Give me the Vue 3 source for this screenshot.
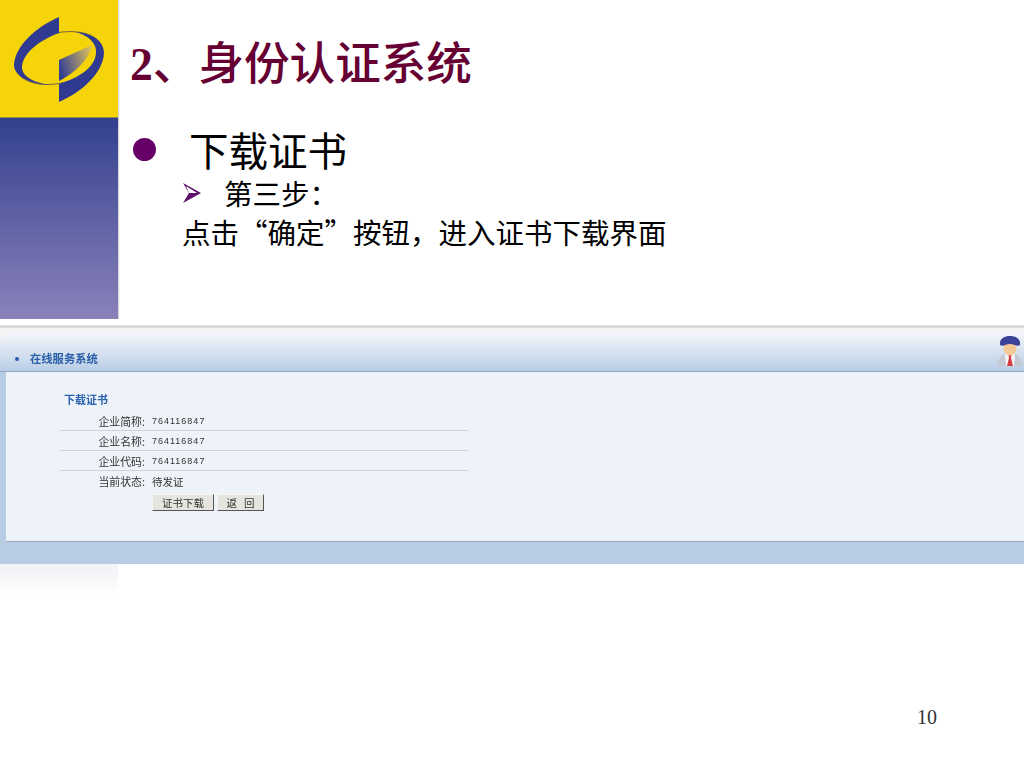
<script setup>
const rows = [
  { label: '企业简称:', value: '764116847' },
  { label: '企业名称:', value: '764116847' },
  { label: '企业代码:', value: '764116847' },
  { label: '当前状态:', value: '待发证' }
]
</script>

<template>
  <div class="slide" lang="zh-CN">
    <section class="top">
      <aside class="side">
        <div class="logo">
          <svg width="118" height="118" viewBox="0 0 118 118">
            <defs>
              <linearGradient id="wedge" x1="0" y1="0.6" x2="1" y2="0.3">
                <stop offset="0" stop-color="#343f92" />
                <stop offset="1" stop-color="#d8bd5c" />
              </linearGradient>
            </defs>
            <ellipse cx="59" cy="58" rx="44" ry="25" transform="rotate(-14 59 58)" fill="none" stroke="#7a6a3a" stroke-width="1" />
            <path d="M59 17 L59 33 C40 40 24 52 22 66 C21 76 34 83 50 85 C30 84 14 76 14 65 C15 46 36 27 59 17 Z" fill="#2f3a90" />
            <path d="M59 102 L59 84 C78 78 95 68 96 53 C97 43 88 35 75 32 C92 33 104 41 104 53 C103 73 82 92 59 102 Z" fill="#2f3a90" />
            <path d="M59 60 L92 45 C90 56 80 70 59 81 Z" fill="url(#wedge)" />
          </svg>
        </div>
        <div class="side-fill"></div>
      </aside>
      <div class="copy">
        <h1 class="title"><span class="num">2</span>、身份认证系统</h1>
        <div class="level1">
          <span class="dot"></span>
          <span>下载证书</span>
        </div>
        <div class="level2">
          <svg class="arrow" width="18" height="20" viewBox="0 0 18 20">
            <path d="M0 0 L18 10 L0 20 L6 10 Z" fill="#5f0f6b" />
            <path d="M3 3 L14 10 L6 10 Z" fill="#fff" />
          </svg>
          <span>第三步：</span>
        </div>
        <p class="body">点击“确定”按钮，进入证书下载界面</p>
      </div>
    </section>

    <section class="shot">
      <div class="shot-head">
        <span class="head-dot"></span>
        <span class="head-title">在线服务系统</span>
        <svg class="person" width="24" height="30" viewBox="0 0 24 30">
          <path d="M0 30 C0 21 5 17 12 17 C19 17 24 21 24 30 Z" fill="#c4c9d2" />
          <path d="M7 18 L17 18 L16 30 L8 30 Z" fill="#f4f4f6" />
          <path d="M10.5 19 L13.5 19 L13 22 L15 30 L9 30 L11 22 Z" fill="#d23a44" />
          <ellipse cx="12" cy="12" rx="6.5" ry="7.5" fill="#f4c995" />
          <path d="M2 9 C1 3 6 0 12 0 C18 0 23 3 22 9 C19 11 16 8 12 8 C8 8 5 11 2 9 Z" fill="#3b4299" />
        </svg>
      </div>
      <div class="shot-main">
        <h2 class="form-title">下载证书</h2>
        <div v-for="row in rows" :key="row.label" class="row">
          <span class="label">{{ row.label }}</span>
          <span class="value">{{ row.value }}</span>
        </div>
        <div class="buttons">
          <button class="btn wide">证书下载</button>
          <button class="btn">返 &nbsp; 回</button>
        </div>
      </div>
      <div class="shot-foot"></div>
    </section>

    <div class="fade"></div>
    <footer class="page">10</footer>
  </div>
</template>

<style scoped>
.slide {
  width: 1024px;
  height: 768px;
  background: #fff;
  display: flex;
  flex-direction: column;
  overflow: hidden;
  font-family: "Noto Sans CJK SC", "Liberation Sans", sans-serif;
  color: #000;
}
.top {
  display: flex;
  height: 319px;
  flex: none;
}
.side {
  width: 118px;
  flex: none;
  display: flex;
  flex-direction: column;
  box-shadow: 1px 0 1px #d5d5d5;
}
.logo {
  height: 118px;
  background: #f6d40a;
  border-bottom: 1px solid #8f8a4a;
  box-sizing: border-box;
}
.logo svg {
  display: block;
}
.side-fill {
  flex: 1;
  background: linear-gradient(#33408f, #8a82ba);
}
.copy {
  padding: 32px 0 0 12px;
}
.title {
  margin: 0;
  height: 56px;
  font-size: 45.6px;
  line-height: 56px;
  font-weight: 500;
  color: #660033;
  white-space: nowrap;
}
.num {
  font-family: "Liberation Serif", serif;
  font-weight: 700;
}
.level1 {
  display: flex;
  align-items: center;
  margin-top: 36px;
  height: 50px;
  font-size: 39.5px;
  line-height: 50px;
}
.dot {
  width: 23px;
  height: 23px;
  margin: 0 33px 0 3px;
  border-radius: 50%;
  background: #660066;
}
.level2 {
  display: flex;
  align-items: center;
  height: 38px;
  padding-left: 53px;
  font-size: 28.5px;
  line-height: 38px;
}
.arrow {
  margin-right: 23px;
}
.body {
  margin: 0;
  padding-left: 52px;
  height: 40px;
  font-size: 28.5px;
  line-height: 40px;
  white-space: nowrap;
}
/* la captura va borrosa en el original */
.shot {
  flex: none;
  height: 245px;
  display: flex;
  flex-direction: column;
  padding-top: 14px;
  box-sizing: border-box;
  background: linear-gradient(#fff 6px, #d0d0d0 7px, #d0d0d0 8px, #f3f3f3 9px);
  filter: blur(0.35px);
}
.shot-head {
  height: 39px;
  flex: none;
  display: flex;
  align-items: flex-end;
  padding: 0 2px 6px 15px;
  border-radius: 8px 0 0 0;
  border-bottom: 1px solid #8fa3c4;
  box-sizing: border-box;
  background: linear-gradient(#f4f6fa, #b9cde6);
}
.head-dot {
  width: 4px;
  height: 4px;
  margin: 0 11px 4px 0;
  border-radius: 50%;
  background: #2a5ea8;
}
.head-title {
  font-size: 11.3px;
  line-height: 14px;
  font-weight: 700;
  color: #2a5ea8;
}
.person {
  margin-left: auto;
  margin-bottom: -1px;
}
.shot-main {
  flex: 1;
  margin-left: 6px;
  padding: 20px 0 0 54px;
  background: #eef2f9;
  border-bottom: 1px solid #9aa5b8;
  box-shadow: -6px 0 0 #b8cce4;
}
.form-title {
  margin: 0 0 5px 4px;
  font-size: 11px;
  line-height: 14px;
  font-weight: 700;
  color: #2a64b0;
}
.row {
  width: 408px;
  height: 20px;
  display: flex;
  align-items: center;
  box-sizing: border-box;
  border-bottom: 1px solid #cfd2d6;
  font-size: 10.9px;
  color: #333;
}
.row:nth-of-type(4) {
  border-bottom: none;
}
.label {
  width: 85px;
  text-align: right;
  flex: none;
}
.value {
  margin-left: 7px;
  letter-spacing: 1px;
  font-family: "Liberation Sans", "Noto Sans CJK SC", sans-serif;
  font-size: 9px;
}
.row:nth-of-type(4) .value {
  font-family: "Noto Sans CJK SC", sans-serif;
  font-size: 10.5px;
  letter-spacing: 0;
}
.buttons {
  display: flex;
  gap: 3px;
  padding-left: 92px;
  margin-top: 3px;
}
.btn {
  width: 47px;
  height: 17px;
  padding: 0;
  font-family: inherit;
  font-size: 10.5px;
  line-height: 13px;
  color: #333;
  background: #e6e4df;
  border: 1px solid;
  border-color: #f5f5f5 #555 #555 #f5f5f5;
}
.btn.wide {
  width: 62px;
}
.shot-foot {
  height: 22px;
  flex: none;
  background: #b8cce4;
}
.fade {
  width: 118px;
  height: 30px;
  flex: none;
  background: linear-gradient(#f1f1f6, #fff);
}
.page {
  margin-top: 110px;
  padding-right: 87px;
  text-align: right;
  font-family: "Liberation Serif", serif;
  font-size: 20px;
  line-height: 26px;
  color: #333;
}
</style>
